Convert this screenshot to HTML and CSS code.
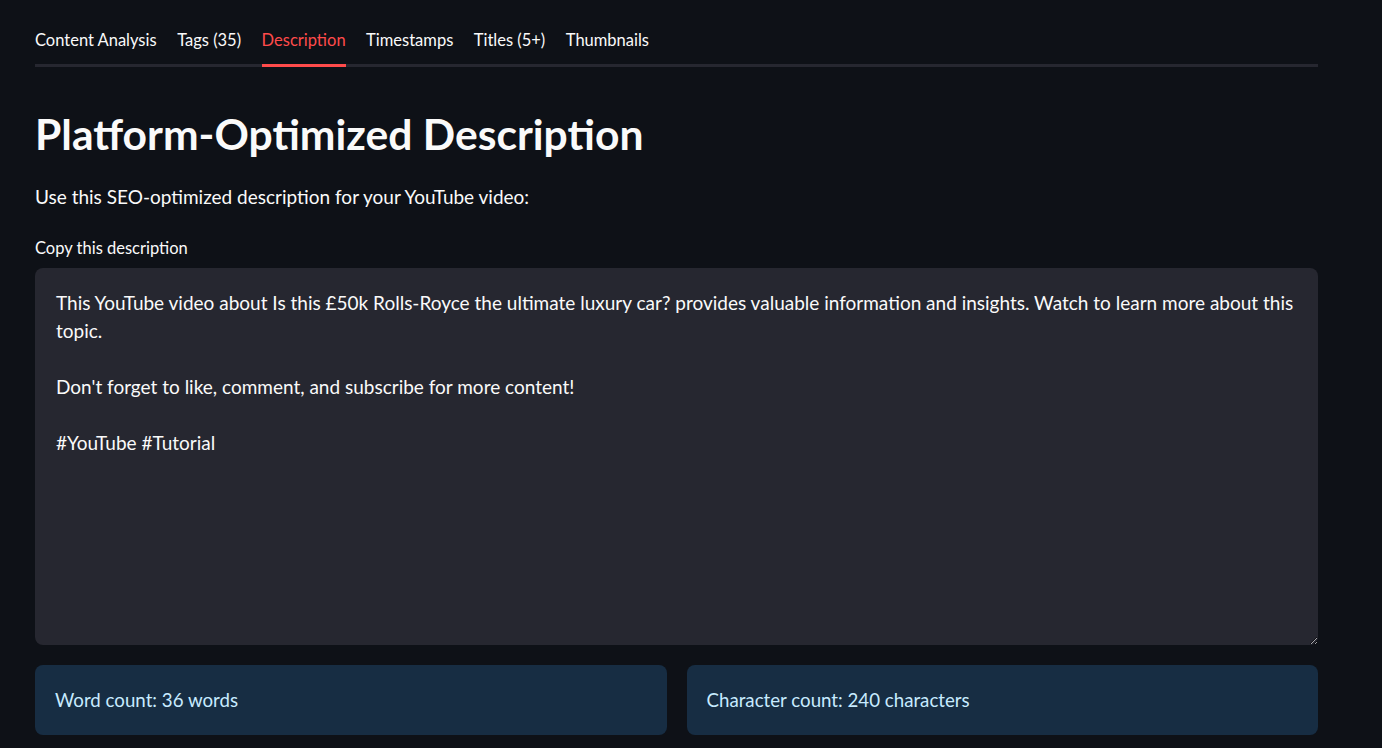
FILE: index.html
```html
<!DOCTYPE html>
<html lang="en">
<head>
<meta charset="utf-8">
<title>Description</title>
<link rel="stylesheet" href="styles.css">
</head>
<body>
<main class="page">
  <nav class="tabs">
    <div class="tab">Content Analysis</div>
    <div class="tab">Tags (35)</div>
    <div class="tab active">Description</div>
    <div class="tab">Timestamps</div>
    <div class="tab">Titles (5+)</div>
    <div class="tab">Thumbnails</div>
  </nav>
  <h1 class="title">Platform-Optimized Description</h1>
  <p class="lead">Use this SEO-optimized description for your YouTube video:</p>
  <label class="label" for="desc">Copy this description</label>
  <textarea id="desc" class="desc">This YouTube video about Is this £50k Rolls-Royce the ultimate luxury car? provides valuable information and insights. Watch to learn more about this topic.

Don't forget to like, comment, and subscribe for more content!

#YouTube #Tutorial</textarea>
  <div class="stats">
    <div class="info">Word count: 36 words</div>
    <div class="info">Character count: 240 characters</div>
  </div>
</main>
</body>
</html>
```
FILE: styles.css
```css
html, body {
  margin: 0;
  padding: 0;
  background: #0e1117;
  color: #fafafa;
  font-family: "Lato", "Noto Sans", sans-serif;
}
.page {
  width: 1283px;
  padding: 0 0 0 35px;
  box-sizing: content-box;
}
.tabs {
  display: flex;
  gap: 20.5px;
  padding-top: 28px;
  border-bottom: 3px solid #262730;
}
.tab {
  font-size: 16.5px;
  line-height: 24px;
  padding-bottom: 12px;
  margin-bottom: -3px;
  border-bottom: 3px solid transparent;
}
.tab.active {
  color: #ff4b4b;
  border-bottom-color: #ff4b4b;
}
.title {
  margin: 39px 0 0;
  font-size: 42.6px;
  line-height: 56px;
  font-weight: 700;
}
.lead {
  margin: 21px 0 0;
  font-size: 19px;
  line-height: 28px;
}
.label {
  display: block;
  margin-top: 27px;
  font-size: 16.5px;
  line-height: 20px;
}
.desc {
  display: block;
  box-sizing: border-box;
  width: 100%;
  height: 377px;
  margin-top: 10px;
  padding: 21px 20px 21px 21px;
  background: #262730;
  color: #fafafa;
  border: none;
  border-radius: 8px;
  font-family: inherit;
  font-size: 19px;
  line-height: 28px;
  resize: vertical;
  outline: none;
}
.stats {
  display: flex;
  gap: 20px;
  margin-top: 20px;
}
.info {
  flex: 1;
  height: 70px;
  display: flex;
  align-items: center;
  padding: 0 20px;
  background: #172d43;
  color: #c7ebff;
  border-radius: 8px;
  font-size: 18.7px;
}
```
